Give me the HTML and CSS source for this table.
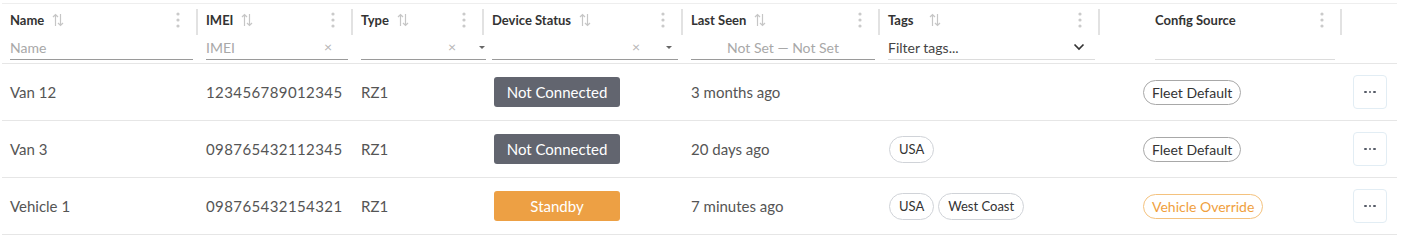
FILE: index.html
```html
<!DOCTYPE html>
<html>
<head>
<meta charset="utf-8">
<link rel="stylesheet" href="styles.css">
</head>
<body>
<div class="table">
  <div class="row head">
    <div class="hc"><span class="ht">Name</span><svg class="sort" width="12" height="14" viewBox="0 0 12 14"><path d="M3.5 13V1.5M1 4l2.5-2.5L6 4M8.5 1v11.5M6 10l2.5 2.5L11 10"/></svg><svg class="kebab" width="4" height="16" viewBox="0 0 4 16"><circle cx="2" cy="2" r="1.6"/><circle cx="2" cy="8" r="1.6"/><circle cx="2" cy="14" r="1.6"/></svg><span class="sep"></span></div>
    <div class="hc"><span class="ht">IMEI</span><svg class="sort" width="12" height="14" viewBox="0 0 12 14"><path d="M3.5 13V1.5M1 4l2.5-2.5L6 4M8.5 1v11.5M6 10l2.5 2.5L11 10"/></svg><svg class="kebab" width="4" height="16" viewBox="0 0 4 16"><circle cx="2" cy="2" r="1.6"/><circle cx="2" cy="8" r="1.6"/><circle cx="2" cy="14" r="1.6"/></svg><span class="sep"></span></div>
    <div class="hc"><span class="ht">Type</span><svg class="sort" width="12" height="14" viewBox="0 0 12 14"><path d="M3.5 13V1.5M1 4l2.5-2.5L6 4M8.5 1v11.5M6 10l2.5 2.5L11 10"/></svg><svg class="kebab" width="4" height="16" viewBox="0 0 4 16"><circle cx="2" cy="2" r="1.6"/><circle cx="2" cy="8" r="1.6"/><circle cx="2" cy="14" r="1.6"/></svg><span class="sep"></span></div>
    <div class="hc"><span class="ht">Device Status</span><svg class="sort" width="12" height="14" viewBox="0 0 12 14"><path d="M3.5 13V1.5M1 4l2.5-2.5L6 4M8.5 1v11.5M6 10l2.5 2.5L11 10"/></svg><svg class="kebab" width="4" height="16" viewBox="0 0 4 16"><circle cx="2" cy="2" r="1.6"/><circle cx="2" cy="8" r="1.6"/><circle cx="2" cy="14" r="1.6"/></svg><span class="sep"></span></div>
    <div class="hc"><span class="ht">Last Seen</span><svg class="sort" width="12" height="14" viewBox="0 0 12 14"><path d="M3.5 13V1.5M1 4l2.5-2.5L6 4M8.5 1v11.5M6 10l2.5 2.5L11 10"/></svg><svg class="kebab" width="4" height="16" viewBox="0 0 4 16"><circle cx="2" cy="2" r="1.6"/><circle cx="2" cy="8" r="1.6"/><circle cx="2" cy="14" r="1.6"/></svg><span class="sep"></span></div>
    <div class="hc"><span class="ht">Tags</span><svg class="sort sort-wide" width="12" height="14" viewBox="0 0 12 14"><path d="M3.5 13V1.5M1 4l2.5-2.5L6 4M8.5 1v11.5M6 10l2.5 2.5L11 10"/></svg><svg class="kebab" width="4" height="16" viewBox="0 0 4 16"><circle cx="2" cy="2" r="1.6"/><circle cx="2" cy="8" r="1.6"/><circle cx="2" cy="14" r="1.6"/></svg><span class="sep"></span></div>
    <div class="hc hc-config"><span class="ht">Config Source</span><svg class="kebab" width="4" height="16" viewBox="0 0 4 16"><circle cx="2" cy="2" r="1.6"/><circle cx="2" cy="8" r="1.6"/><circle cx="2" cy="14" r="1.6"/></svg><span class="sep"></span></div>
    <div class="hc"></div>

    <div class="fc"><div class="inp"><span class="ph">Name</span></div></div>
    <div class="fc"><div class="inp"><span class="ph">IMEI</span><span class="x x-imei">×</span></div></div>
    <div class="fc fc-type"><div class="inp"><span class="x x-type">×</span><span class="caret"></span></div></div>
    <div class="fc"><div class="inp"><span class="x x-dev">×</span><span class="caret caret-dev"></span></div></div>
    <div class="fc"><div class="inp inp-center"><span class="ph">Not Set — Not Set</span></div></div>
    <div class="fc"><div class="inp inp-tags"><span class="val">Filter tags...</span><svg class="chev" width="12" height="8" viewBox="0 0 12 8"><path d="M1.5 1.5l4.5 4.5 4.5-4.5"/></svg></div></div>
    <div class="fc fc-config"><div class="inp"></div></div>
    <div class="fc"></div>
  </div>

  <div class="row">
    <div class="c">Van 12</div>
    <div class="c num">123456789012345</div>
    <div class="c">RZ1</div>
    <div class="c"><span class="status grey">Not Connected</span></div>
    <div class="c">3 months ago</div>
    <div class="c tags"></div>
    <div class="c cfg"><span class="src">Fleet Default</span></div>
    <div class="c act"><button class="more"><span></span><span></span><span></span></button></div>
  </div>
  <div class="row">
    <div class="c">Van 3</div>
    <div class="c num">098765432112345</div>
    <div class="c">RZ1</div>
    <div class="c"><span class="status grey">Not Connected</span></div>
    <div class="c">20 days ago</div>
    <div class="c tags"><span class="tag">USA</span></div>
    <div class="c cfg"><span class="src">Fleet Default</span></div>
    <div class="c act"><button class="more"><span></span><span></span><span></span></button></div>
  </div>
  <div class="row">
    <div class="c">Vehicle 1</div>
    <div class="c num">098765432154321</div>
    <div class="c">RZ1</div>
    <div class="c"><span class="status orange">Standby</span></div>
    <div class="c">7 minutes ago</div>
    <div class="c tags"><span class="tag">USA</span><span class="tag">West Coast</span></div>
    <div class="c cfg"><span class="src override">Vehicle Override</span></div>
    <div class="c act"><button class="more"><span></span><span></span><span></span></button></div>
  </div>
</div>
</body>
</html>
```

FILE: styles.css
```css
* { box-sizing: border-box; }
html, body { margin: 0; background: #fff; }
body {
  font-family: Lato, "Liberation Sans", sans-serif;
  color: #555;
  padding: 3px 18px 0 2px;
}
.table {
  width: 1395px;
  border-top: 1px solid #eeeeee;
}
.row {
  display: grid;
  grid-template-columns: 196px 155px 131px 199px 197px 220px 242px 55px;
  border-bottom: 1px solid #e6e6e6;
}
.row.head {
  grid-template-rows: 31px 28px;
}
.hc {
  display: flex;
  align-items: center;
  padding-left: 8px;
  min-width: 0;
}
.ht {
  font-size: 13px;
  font-weight: 700;
  color: #333;
  white-space: nowrap;
}
.sort {
  margin-left: 8px;
  flex: none;
}
.sort path {
  stroke: #c6c6c6;
  stroke-width: 1.2;
  fill: none;
}
.sort-wide { margin-left: 15px; }
.kebab {
  margin-left: auto;
  margin-right: 16px;
  flex: none;
}
.kebab circle { fill: #cacaca; }
.sep {
  width: 2px;
  height: 26px;
  background: #e2e2e2;
  flex: none;
  align-self: flex-end;
}
.hc-config { padding-left: 55px; }

.fc {
  padding: 0 5px 0 8px;
  display: flex;
  align-items: flex-start;
}
.fc-type { padding-right: 0; margin-right: -2px; }
.fc-config { padding-left: 55px; padding-right: 7px; }
.inp {
  position: relative;
  width: 100%;
  height: 25px;
  border-bottom: 1px solid #9a9a9a;
  display: flex;
  align-items: center;
  font-size: 14px;
}
.fc-config .inp { border-bottom-color: #dcdcdc; }
.inp-tags { border-bottom-color: #dcdcdc; }
.ph { color: #a8a8a8; }
.val { color: #444; }
.inp-center { justify-content: center; }
.x {
  position: absolute;
  top: 3px;
  color: #b5b5b5;
  font-size: 14px;
  line-height: 18px;
}
.x-imei { right: 16px; }
.x-type { right: 30px; }
.x-dev { right: 38px; }
.caret {
  position: absolute;
  right: 1px;
  top: 11px;
  width: 0;
  height: 0;
  border-left: 3px solid transparent;
  border-right: 3px solid transparent;
  border-top: 3px solid #666;
}
.caret-dev { right: 6px; }
.chev {
  margin-left: auto;
  margin-right: 10px;
}
.chev path {
  stroke: #333;
  stroke-width: 1.7;
  fill: none;
}

.c {
  height: 56px;
  display: flex;
  align-items: center;
  padding-left: 8px;
  font-size: 15px;
  color: #555;
  white-space: nowrap;
  min-width: 0;
}
.num { letter-spacing: 0.4px; }
.status {
  display: inline-flex;
  align-items: center;
  justify-content: center;
  width: 126px;
  height: 30px;
  border-radius: 3px;
  color: #fff;
  font-size: 15px;
  margin-left: 2px;
}
.status.grey { background: #62656f; }
.status.orange { background: #eda044; }
.tags { gap: 4px; padding-left: 9px; }
.tag {
  display: inline-flex;
  align-items: center;
  height: 27px;
  padding: 0 9px;
  border: 1px solid #d0d3d8;
  border-radius: 14px;
  font-size: 13px;
  color: #333;
}
.cfg { padding-left: 43px; }
.src {
  display: inline-flex;
  align-items: center;
  height: 25px;
  padding: 0 8px;
  border: 1px solid #a8a8a8;
  border-radius: 13px;
  font-size: 14px;
  color: #333;
}
.src.override {
  border-color: #f4c27e;
  color: #f0a03d;
}
.act { padding-left: 11px; }
.more {
  width: 34px;
  height: 34px;
  border: 1px solid #e2edf4;
  border-radius: 4px;
  background: #fff;
  display: flex;
  align-items: center;
  justify-content: center;
  gap: 2px;
  padding: 0;
}
.more span {
  width: 2.5px;
  height: 2.5px;
  border-radius: 50%;
  background: #555a66;
}
```
